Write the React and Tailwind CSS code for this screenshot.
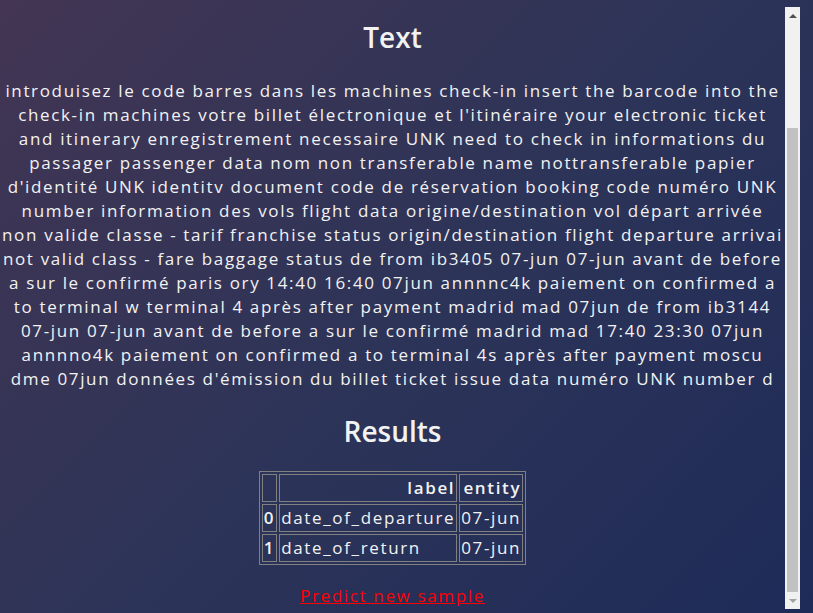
import React from 'react';

const lines = [
  'introduisez le code barres dans les machines check-in insert the barcode into the',
  "check-in machines votre billet électronique et l'itinéraire your electronic ticket",
  'and itinerary enregistrement necessaire UNK need to check in informations du',
  'passager passenger data nom non transferable name nottransferable papier',
  "d'identité UNK identitv document code de réservation booking code numéro UNK",
  'number information des vols flight data origine/destination vol départ arrivée',
  'non valide classe - tarif franchise status origin/destination flight departure arrivai',
  'not valid class - fare baggage status de from ib3405 07-jun 07-jun avant de before',
  'a sur le confirmé paris ory 14:40 16:40 07jun annnnc4k paiement on confirmed a',
  'to terminal w terminal 4 après after payment madrid mad 07jun de from ib3144',
  '07-jun 07-jun avant de before a sur le confirmé madrid mad 17:40 23:30 07jun',
  'annnno4k paiement on confirmed a to terminal 4s après after payment moscu',
  "dme 07jun données d'émission du billet ticket issue data numéro UNK number d",
];

const rows = [
  { idx: 0, label: 'date_of_departure', entity: '07-jun' },
  { idx: 1, label: 'date_of_return', entity: '07-jun' },
];

const Scrollbar = () => (
  <div className="flex h-full w-[15px] flex-col bg-[#f1f1f1]">
    <div className="flex h-[17px] items-center justify-center">
      <div className="h-0 w-0 border-x-[4px] border-b-[4px] border-x-transparent border-b-[#505050]"></div>
    </div>
    <div className="flex flex-1 flex-col px-[2px]">
      <div className="mt-[104px] flex-1 bg-[#c1c1c1]"></div>
    </div>
    <div className="flex h-[17px] items-center justify-center">
      <div className="h-0 w-0 border-x-[4px] border-t-[4px] border-x-transparent border-t-[#a3a3a3]"></div>
    </div>
  </div>
);

export default function App() {
  return (
    <div className="h-[613px] w-[813px] overflow-hidden bg-[linear-gradient(135deg,#433553_0%,#2d3458_50%,#1e2b58_100%)] pt-[7px] font-['Open_Sans',sans-serif] text-[#f2f2f2]">
      <div className="flex h-[602px] w-[800px]">
        <div className="h-full w-[785px] overflow-hidden">
          <div className="flex flex-col items-center">
            <h2 className="mt-[11px] text-[28px] font-semibold leading-[38px]">Text</h2>
            <p className="mt-[23px] text-center text-[17px] leading-[24px] tracking-[1.65px] whitespace-nowrap">
              {lines.map((l, i) => (
                <React.Fragment key={i}>
                  {l}
                  {i < lines.length - 1 && <br />}
                </React.Fragment>
              ))}
            </p>

            <h2 className="mt-[21px] text-[28px] font-semibold leading-[38px]">Results</h2>
            <table className="mt-[21px] border border-[#808080] border-separate border-spacing-[2px] text-[17px] leading-[24px] tracking-[1.65px]">
              <thead>
                <tr>
                  <th className="border border-[#808080] px-[1px] py-[1px]"></th>
                  <th className="border border-[#808080] px-[1px] py-[1px] text-right font-semibold">label</th>
                  <th className="border border-[#808080] px-[1px] py-[1px] text-right font-semibold">entity</th>
                </tr>
              </thead>
              <tbody>
                {rows.map((r) => (
                  <tr key={r.idx}>
                    <th className="border border-[#808080] px-[1px] py-[1px] font-semibold">{r.idx}</th>
                    <td className="border border-[#808080] px-[1px] py-[1px] text-left">{r.label}</td>
                    <td className="border border-[#808080] px-[1px] py-[1px] text-left">{r.entity}</td>
                  </tr>
                ))}
              </tbody>
            </table>

            <a href="#" className="mt-[19px] text-[17px] leading-[24px] tracking-[1.65px] text-[#ff0000] underline">
              Predict new sample
            </a>
          </div>
        </div>
        <Scrollbar />
      </div>
    </div>
  );
}
